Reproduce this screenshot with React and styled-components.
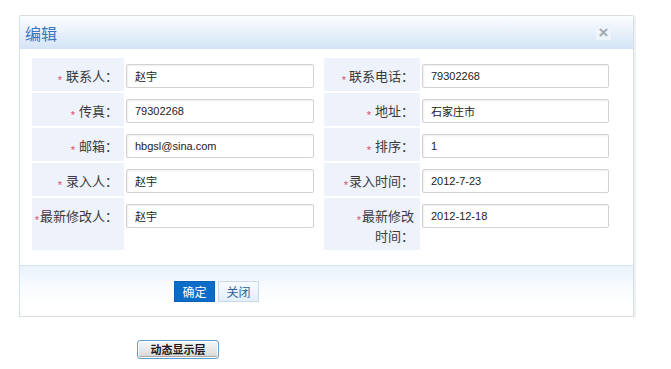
import React from 'react';
import styled, { createGlobalStyle } from 'styled-components';

const GlobalStyle = createGlobalStyle`
  body {
    margin: 0;
    background: #fff;
    font-family: "Liberation Sans", "Noto Sans CJK SC", sans-serif;
  }
`;

const Page = styled.div`
  padding: 15px 0 0 19px;
`;

const Dialog = styled.div`
  width: 615px;
  box-sizing: border-box;
  border: 1px solid #d9dde2;
  border-left-color: #cfe0f1;
  border-radius: 2px 3px 0 0;
  background: #fff;
  box-shadow: 2px 0 0 #eef2f7;
`;

const Header = styled.div`
  height: 33px;
  display: flex;
  align-items: center;
  justify-content: space-between;
  padding: 0 22px 0 5px;
  background: linear-gradient(#fbfdff, #eaf2fb 45%, #d3e4f6);
`;

const Title = styled.span`
  font-family: "Noto Sans CJK SC", sans-serif;
  font-size: 16px;
  color: #3a77bc;
`;

const CloseBox = styled.span`
  width: 15px;
  height: 15px;
  display: flex;
  align-items: center;
  justify-content: center;
  background: #eef4fb;
  color: #a0a8b0;
  font-family: "Liberation Sans", sans-serif;
  font-size: 17px;
  font-weight: bold;
  line-height: 1;
`;

const Body = styled.div`
  padding: 9px 12px 15px;
`;

const FormGrid = styled.div`
  display: grid;
  grid-template-columns: 92px 196px 96px 192px;
  grid-template-rows: repeat(4, 33px) 52px;
  column-gap: 2px;
  row-gap: 2px;
`;

const LabelCell = styled.div`
  background: #edf2fb;
  padding: 10px 6px 0 0;
  text-align: right;
  font-family: "Noto Sans CJK SC", sans-serif;
  font-size: 13px;
  line-height: 16px;
  color: #3a3a3a;
  white-space: nowrap;
`;

const Star = styled.span`
  color: #d9506a;
  font-family: "Liberation Sans", sans-serif;
  font-size: 11px;
  margin-right: ${({ $gap }) => $gap}px;
  vertical-align: -3px;
`;

const InputCell = styled.div`
  padding-top: 6px;
`;

const Field = styled.input`
  box-sizing: border-box;
  width: ${({ $w }) => $w}px;
  height: 24px;
  padding: 0 8px;
  border: 1px solid #d2d2d2;
  border-radius: 2px;
  box-shadow: inset 1px 1px 2px rgba(0, 0, 0, 0.07);
  font-family: "Liberation Sans", "Noto Sans CJK SC", sans-serif;
  font-size: 11px;
  color: #222;
  outline: none;
  background: #fff;
`;

const Footer = styled.div`
  height: 51px;
  box-sizing: border-box;
  border-top: 1px solid #d2e3f4;
  padding: 15px 0 0 154px;
  display: flex;
  gap: 3px;
  background: linear-gradient(#eaf2fb, #f7fbff 40%, #fff 75%);
`;

const DlgButton = styled.button`
  width: 41px;
  height: 21px;
  padding: 0;
  font-family: "Noto Sans CJK SC", sans-serif;
  font-size: 12px;
  line-height: 1;
  cursor: pointer;
  border: 1px solid ${({ $primary }) => ($primary ? '#0b63b8' : '#c9d9ea')};
  background: ${({ $primary }) =>
    $primary ? '#0c6dc8' : 'linear-gradient(#f7fbff, #e3eef9)'};
  color: ${({ $primary }) => ($primary ? '#fff' : '#2e5f95')};
`;

const ShowWrap = styled.div`
  margin-top: 23px;
  padding-left: 118px;
`;

const ShowButton = styled.button`
  width: 82px;
  height: 19px;
  padding: 0;
  border: 1px solid #5e9fc9;
  border-radius: 3px;
  background: linear-gradient(#f7f7f7, #e4e4e4 60%, #d6d6d6);
  box-shadow: inset 0 0 0 1px #fff, inset 0 -1px 0 1px #a9a9a9;
  font-family: "Noto Sans CJK SC", sans-serif;
  font-size: 11px;
  font-weight: bold;
  color: #1a1a1a;
  line-height: 1;
`;

// [label lines, gap after star] x2 with values
const rows = [
  [['联系人：'], 4, '赵宇', ['联系电话：'], 3, '79302268'],
  [['传真：'], 4, '79302268', ['地址：'], 4, '石家庄市'],
  [['邮箱：'], 4, 'hbgsl@sina.com', ['排序：'], 4, '1'],
  [['录入人：'], 4, '赵宇', ['录入时间：'], 1, '2012-7-23'],
  [['最新修改人：'], 1, '赵宇', ['最新修改', '时间：'], 1, '2012-12-18'],
];

const Label = ({ lines, gap }) => (
  <LabelCell>
    <Star $gap={gap}>*</Star>
    {lines.map((l, i) => (
      <React.Fragment key={i}>
        {i > 0 && <br />}
        {l}
      </React.Fragment>
    ))}
  </LabelCell>
);

export default function App() {
  return (
    <>
      <GlobalStyle />
      <Page>
        <Dialog>
          <Header>
            <Title>编辑</Title>
            <CloseBox>×</CloseBox>
          </Header>
          <Body>
            <FormGrid>
              {rows.map((r, i) => (
                <React.Fragment key={i}>
                  <Label lines={r[0]} gap={r[1]} />
                  <InputCell>
                    <Field $w={188} value={r[2]} readOnly />
                  </InputCell>
                  <Label lines={r[3]} gap={r[4]} />
                  <InputCell>
                    <Field $w={187} value={r[5]} readOnly />
                  </InputCell>
                </React.Fragment>
              ))}
            </FormGrid>
          </Body>
          <Footer>
            <DlgButton $primary>确定</DlgButton>
            <DlgButton>关闭</DlgButton>
          </Footer>
        </Dialog>
        <ShowWrap>
          <ShowButton>动态显示层</ShowButton>
        </ShowWrap>
      </Page>
    </>
  );
}
